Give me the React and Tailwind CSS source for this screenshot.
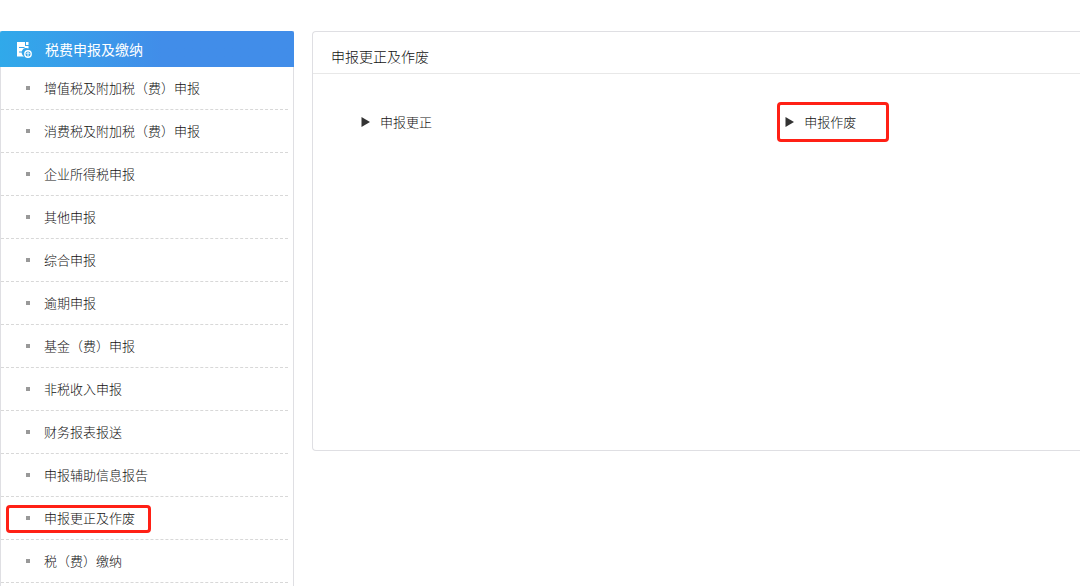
import React, { useState } from 'react';

const MENU_ITEMS = [
  '增值税及附加税（费）申报',
  '消费税及附加税（费）申报',
  '企业所得税申报',
  '其他申报',
  '综合申报',
  '逾期申报',
  '基金（费）申报',
  '非税收入申报',
  '财务报表报送',
  '申报辅助信息报告',
  '申报更正及作废',
  '税（费）缴纳',
];

const ACTIONS = [
  { label: '申报更正', marked: false },
  { label: '申报作废', marked: true },
];

function TaxIcon() {
  return (
    <svg className="w-4 h-[18px] shrink-0" viewBox="0 0 16 18" aria-hidden="true">
      <path d="M1 2h8v4h3.500v2.500a4.500 4.500 0 0 0-4.500 8H1z" fill="#fff" />
      <path d="M10 2h2.500v3H10z" fill="#fff" />
      <path d="M3 7.500h5.500M3 12h3.500" stroke="#35a3ea" strokeWidth="1.200" />
      <circle cx="12" cy="14" r="3.200" fill="none" stroke="#fff" strokeWidth="1.400" />
      <path d="M12 16.500v-4M10.500 14l1.500-1.500 1.500 1.500" stroke="#fff" strokeWidth="1" fill="none" />
    </svg>
  );
}

function Sidebar({ active, onSelect }) {
  return (
    <nav className="w-[294px] shrink-0 border-x border-[#dfdfe3]">
      <h2 className="flex items-center gap-[13px] h-9 -mx-px pl-4 rounded-t-xs text-[14px] text-white bg-linear-to-r from-[#30a9ea] to-[#418de9] to-55%">
        <TaxIcon />
        税费申报及缴纳
      </h2>
      <ul className="pr-[5px]">
        {MENU_ITEMS.map((item) => (
          <li key={item} className="relative h-[43px] border-b border-dashed border-[#d8d8d8]">
            <a
              href="#"
              onClick={() => onSelect(item)}
              className="flex items-center gap-[14px] h-full pl-[25px] text-[13px] font-light"
            >
              <span className="w-1 h-1 bg-[#999]"></span>
              {item}
            </a>
            {active === item && (
              <span className="absolute left-[5px] top-2 w-[145px] h-7 border-3 border-[#ff2015] rounded-sm pointer-events-none"></span>
            )}
          </li>
        ))}
      </ul>
    </nav>
  );
}

function ActionLink({ label, marked }) {
  return (
    <a href="#" className="relative flex items-center gap-[10px] w-[104px] h-10 text-[13px] font-light">
      <svg className="w-[9px] h-[10px]" viewBox="0 0 9 10" aria-hidden="true">
        <path d="M0.500 0L9 5L0.500 10z" fill="#333" />
      </svg>
      {label}
      {marked && (
        <span className="absolute inset-y-0 right-0 -left-2 border-3 border-[#ff2015] rounded-sm pointer-events-none"></span>
      )}
    </a>
  );
}

export default function App() {
  const [active, setActive] = useState('申报更正及作废');

  return (
    <div className="flex gap-[18px] min-h-screen pt-[31px] bg-white text-[#111] font-['Noto_Sans_CJK_SC',sans-serif]">
      <Sidebar active={active} onSelect={setActive} />
      <main className="flex-1 min-w-0 self-start min-h-[420px] border border-r-0 border-[#dfdfe3] rounded-l-sm">
        <h1 className="flex items-center h-[42px] pt-2 pl-[18px] border-b border-[#e8e8e8] text-[14px] font-light">
          {active}
        </h1>
        <div className="grid grid-cols-[59fr_41fr] pt-7 pl-12">
          {ACTIONS.map((action) => (
            <ActionLink key={action.label} {...action} />
          ))}
        </div>
      </main>
    </div>
  );
}
